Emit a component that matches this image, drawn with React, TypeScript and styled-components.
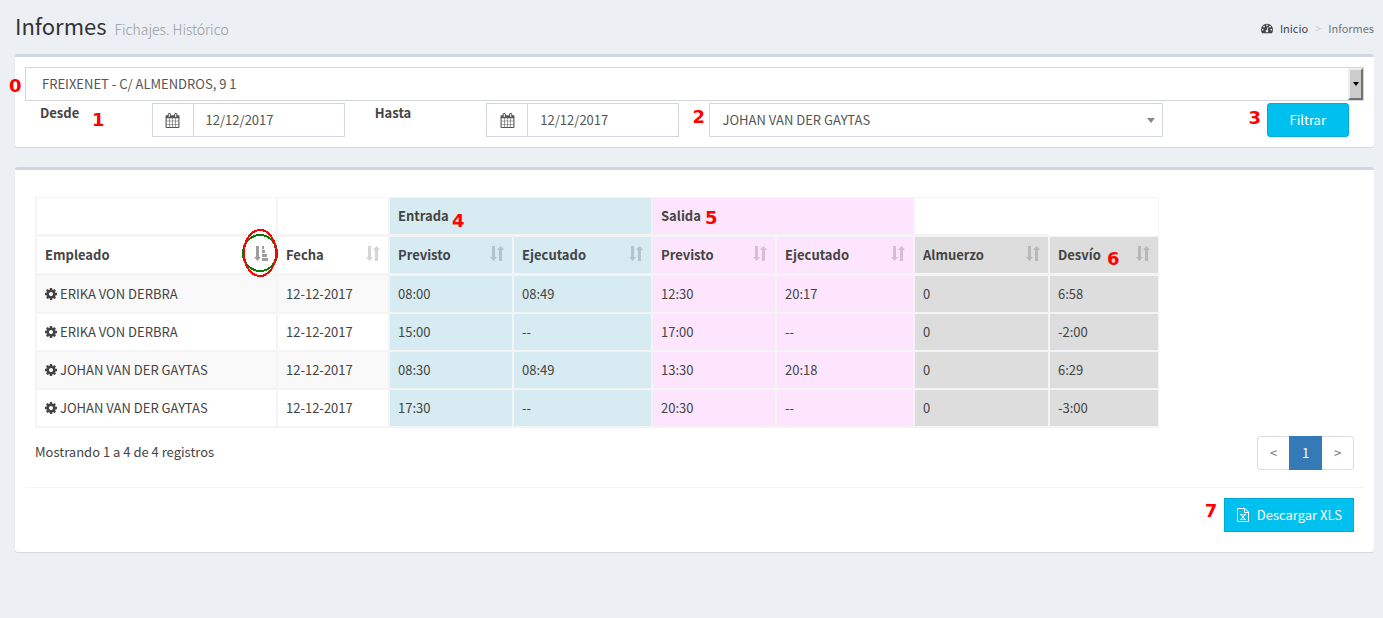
import React from 'react';
import styled, { createGlobalStyle, css } from 'styled-components';

const GlobalStyle = createGlobalStyle`
  *, *::before, *::after { box-sizing: border-box; }
  body {
    margin: 0;
    background: #ecf0f5;
    color: #444;
    font-family: "Source Sans Pro", "Noto Sans CJK SC", sans-serif;
    font-size: 13px;
    line-height: 20px;
  }
  html { background: #ecf0f5; }
  button, input, select { font: inherit; color: inherit; margin: 0; }
`;

/* ---------- icons ---------- */

const Svg = styled.svg<{ $size: number }>`
  display: block;
  flex: none;
  width: ${p => p.$size}px;
  height: ${p => p.$size}px;
  fill: currentColor;
`;

const CALENDAR =
  'M192 1664h288v-288h-288v288zm352 0h320v-288h-320v288zm-352-352h288v-320h-288v320zm352 0h320v-320h-320v320zm-352-384h288v-288h-288v288zm736 736h320v-288h-320v288zm-384-736h320v-288h-320v288zm768 736h288v-288h-288v288zm-384-352h320v-320h-320v320zm-352-864v-288q0-13-9.500-22.500t-22.500-9.500h-64q-13 0-22.500 9.500t-9.500 22.500v288q0 13 9.500 22.500t22.500 9.500h64q13 0 22.500-9.500t9.500-22.500zm736 864h288v-320h-288v320zm-384-384h320v-288h-320v288zm384 0h288v-288h-288v288zm32-480v-288q0-13-9.500-22.500t-22.500-9.500h-64q-13 0-22.500 9.500t-9.500 22.500v288q0 13 9.500 22.500t22.500 9.500h64q13 0 22.500-9.500t9.500-22.500zm384-64v1280q0 52-38 90t-90 38h-1408q-52 0-90-38t-38-90v-1280q0-52 38-90t90-38h128v-96q0-66 47-113t113-47h64q66 0 113 47t47 113v96h384v-96q0-66 47-113t113-47h64q66 0 113 47t47 113v96h128q52 0 90 38t38 90z';
const COG =
  'M1152 896q0-106-75-181t-181-75-181 75-75 181 75 181 181 75 181-75 75-181zm512-109v222q0 12-8 23t-20 13l-185 28q-19 54-39 91 35 50 107 138 10 12 10 25t-9 23q-27 37-99 108t-94 71q-12 0-26-9l-138-108q-44 23-91 38-16 136-29 186-7 28-36 28h-222q-14 0-24.500-8.500t-11.500-21.500l-28-184q-49-16-90-37l-141 107q-10 9-25 9-14 0-25-11-126-114-165-168-7-10-7-23 0-12 8-23 15-21 51-66.500t54-70.500q-27-50-41-99l-183-27q-13-2-21-12.500t-8-23.500v-222q0-12 8-23t19-13l186-28q14-46 39-92-40-57-107-138-10-12-10-24 0-10 9-23 26-36 98.500-107.500t94.500-71.500q13 0 26 10l138 107q44-23 91-38 16-136 29-186 7-28 36-28h222q14 0 24.500 8.500t11.500 21.500l28 184q49 16 90 37l142-107q9-9 24-9 13 0 25 10 129 119 165 170 7 8 7 22 0 12-8 23-15 21-51 66.500t-54 70.500q26 50 41 98l183 28q13 2 21 12.500t8 23.500z';
const DASHBOARD =
  'M384 1152q0-53-37.500-90.500t-90.500-37.500-90.500 37.500-37.500 90.500 37.500 90.500 90.500 37.500 90.500-37.500 37.500-90.500zm192-448q0-53-37.500-90.500t-90.500-37.500-90.500 37.500-37.500 90.500 37.500 90.500 90.500 37.500 90.500-37.500 37.500-90.500zm428 481l101-382q6-26-7.500-48.500t-38.500-29.500-48 6.500-30 39.500l-101 382q-60 5-107 43.500t-63 98.500q-20 77 20 146t117 89 146-20 89-117q16-60-6-117t-72-91zm660-33q0-53-37.500-90.500t-90.500-37.500-90.500 37.500-37.500 90.500 37.500 90.500 90.500 37.500 90.500-37.500 37.500-90.500zm-640-640q0-53-37.500-90.500t-90.500-37.500-90.500 37.500-37.500 90.500 37.500 90.500 90.500 37.500 90.500-37.500 37.500-90.500zm448 192q0-53-37.500-90.500t-90.500-37.500-90.500 37.500-37.500 90.500 37.500 90.500 90.500 37.500 90.500-37.500 37.500-90.500zm320 448q0 261-141 483-19 29-54 29h-1402q-35 0-54-29-141-221-141-483 0-182 71-348t191-286 286-191 348-71 348 71 286 191 191 286 71 348z';

const Icon = ({
  path,
  size,
  viewBox = '0 0 1792 1792',
}: {
  path: string;
  size: number;
  viewBox?: string;
}) => (
  <Svg $size={size} viewBox={viewBox} aria-hidden="true">
    <path d={path} />
  </Svg>
);

const ExcelIcon = () => (
  <Svg $size={14} viewBox="0 0 14 14" aria-hidden="true">
    <path
      d="M1.500.500h7.500l3.500 3.500v9.500h-11zM8.500.500v4h4"
      fill="none"
      stroke="currentColor"
    />
    <path
      d="M5 6.500l4 5M9 6.500l-4 5M4 6.500h2.500M7.500 6.500h2.500M4 11.500h2.500M7.500 11.500h2.500"
      fill="none"
      stroke="currentColor"
    />
  </Svg>
);

const SortGlyph = styled.svg<{ $active?: boolean }>`
  display: block;
  flex: none;
  width: 14px;
  height: 16px;
  margin-top: 1px;
  fill: #000;
  opacity: ${p => (p.$active ? 0.38 : 0.16)};
`;

const SortIcon = ({ active }: { active?: boolean }) => (
  <SortGlyph $active={active} viewBox="0 0 14 16" aria-hidden="true">
    <path d="M2 0h3v11h2l-3.500 4L0 11h2z" />
    {active ? (
      <path d="M8 0h2v3H8zM8 4h3v3H8zM8 8h5v3H8zM8 12h6v3H8z" />
    ) : (
      <path d="M9 15h3V4h2l-3.500-4L7 4h2z" />
    )}
  </SortGlyph>
);

/* ---------- callouts ---------- */

const Mark = styled.span<{ $x: number; $y: number }>`
  position: absolute;
  left: ${p => p.$x}px;
  top: ${p => p.$y}px;
  z-index: 2;
  color: #f00;
  font: bold 18px/18px "DejaVu Sans", sans-serif;
`;

const Ring = styled.svg`
  position: absolute;
  right: -2px;
  top: -9px;
  z-index: 2;
  width: 36px;
  height: 50px;
  fill: none;
  stroke-width: 2;
  shape-rendering: crispEdges;
`;

/* ---------- page ---------- */

const Page = styled.main`
  padding: 15px 9px 15px 15px;
`;

const Header = styled.header`
  display: flex;
  justify-content: space-between;
  align-items: center;
  height: 24px;
  margin-bottom: 15px;
`;

const Title = styled.h1`
  margin: 0;
  color: #333;
  font-size: 22px;
  line-height: 24px;
  font-weight: 400;
`;

const Subtitle = styled.small`
  margin-left: 8px;
  color: #999;
  font-family: "Source Sans Pro Light", "Noto Sans CJK SC Light", "Noto Sans CJK SC", sans-serif;
  font-size: 14px;
  font-weight: 300;
`;

const Crumbs = styled.nav`
  display: flex;
  align-items: center;
  font-size: 11px;
  color: #777;
  padding-top: 2px;
`;

const CrumbLink = styled.a`
  display: flex;
  align-items: center;
  gap: 7px;
  color: #444;
  text-decoration: none;
`;

const CrumbSep = styled.span`
  padding: 0 7px;
  color: #ccc;
`;

const Box = styled.section`
  margin-bottom: 20px;
  padding: 10px;
  background: #fff;
  border-top: 3px solid #d2d6de;
  border-radius: 3px;
  box-shadow: 0 1px 1px rgba(0, 0, 0, 0.1);
`;

const SelectWrap = styled.div`
  position: relative;
  display: flex;
`;

const control = css`
  height: 34px;
  background: #fff;
  border: 1px solid #d2d6de;
  border-radius: 0;
  color: #555;
  appearance: none;
  outline: none;
`;

const Select = styled.select<{ $inset: number }>`
  ${control}
  width: 100%;
  padding: 0 ${p => p.$inset}px;
`;

const DropButton = styled.span`
  position: absolute;
  right: 1px;
  top: 1px;
  bottom: 1px;
  width: 15px;
  display: flex;
  align-items: center;
  justify-content: center;
  background: #ccc;
  border: 2px solid;
  border-color: #eee #707070 #707070 #eee;
  pointer-events: none;
`;

const Caret = styled.span<{ $w: number; $color: string }>`
  border: ${p => p.$w}px solid transparent;
  border-top: ${p => p.$w + 1}px solid ${p => p.$color};
  border-bottom: 0;
`;

const SelectCaret = styled.span`
  position: absolute;
  right: 8px;
  top: 15px;
  display: flex;
  pointer-events: none;
`;

const Filters = styled.form`
  display: grid;
  grid-template-columns:
    minmax(0, 3fr) minmax(0, 6fr) minmax(0, 3fr)
    minmax(0, 6fr) minmax(0, 13fr) minmax(0, 5fr);
  margin-top: 2px;
`;

const Field = styled.div`
  position: relative;
  padding: 0 15px;
`;

const ActionField = styled(Field)`
  display: flex;
  justify-content: flex-end;
`;

const Label = styled.label`
  font-weight: 700;
`;

const DateGroup = styled.div`
  display: flex;
`;

const Addon = styled.span`
  ${control}
  flex: none;
  display: flex;
  align-items: center;
  justify-content: center;
  width: 41px;
  border-right: 0;
`;

const DateInput = styled.input`
  ${control}
  flex: 1;
  min-width: 0;
  padding: 0 12px 2px;
`;

const ButtonHolder = styled.div`
  position: relative;
`;

const Button = styled.button<{ $square?: boolean; $pad: number }>`
  display: flex;
  align-items: center;
  gap: 7px;
  height: 34px;
  padding: 0 ${p => p.$pad}px;
  background: #00c0ef;
  border: 1px solid #00acd6;
  border-radius: ${p => (p.$square ? 0 : 3)}px;
  color: #fff;
`;

/* ---------- table ---------- */

const TableArea = styled.div`
  padding: 17px 10px 8px;
`;

const Table = styled.table`
  border: 1px solid #f4f4f4;
  border-collapse: separate;
  border-spacing: 0;
  text-align: left;
`;

type Tone = 'plain' | 'in' | 'out' | 'calc';
const tones: Record<Tone, string> = {
  plain: 'transparent',
  in: '#d7ebf2',
  out: '#fde6fd',
  calc: '#ddd',
};

const cell = css`
  padding: 8px;
  border: 1px solid #f4f4f4;
  &:last-child { border-right: 0; }
`;

const Th = styled.th<{ $tone: Tone }>`
  ${cell}
  position: relative;
  border-bottom-width: 2px;
  background: ${p => tones[p.$tone]};
`;

const GroupTh = styled(Th)<{ $open?: 'right' | 'left' }>`
  height: 38px;
  border-top: 0;
  ${p => p.$open === 'right' && css`border-right-color: transparent;`}
  ${p => p.$open === 'left' && css`border-left: 0; border-bottom-color: transparent;`}
`;

const HeadCell = styled.div`
  display: flex;
  justify-content: space-between;
  height: 20px;
`;

const Row = styled.tr`
  &:nth-child(odd) { background: #f9f9f9; }
`;

const Td = styled.td<{ $tone: Tone }>`
  ${cell}
  background: ${p => tones[p.$tone]};
`;

const Employee = styled.span`
  display: flex;
  align-items: center;
  gap: 3px;
`;

const TableFooter = styled.div`
  display: flex;
  justify-content: space-between;
  align-items: flex-start;
  padding: 0 10px 17px;
`;

const Info = styled.p`
  margin: 0;
  padding-top: 6px;
`;

const Pager = styled.nav`
  display: flex;
`;

const PageLink = styled.a<{ $current?: boolean }>`
  width: 33px;
  height: 34px;
  border: 1px solid #ddd;
  line-height: 32px;
  text-align: center;
  text-decoration: none;
  color: #777;
  background: #fff;
  &:first-child { border-radius: 4px 0 0 4px; border-right: 0; width: 32px; }
  &:last-child { border-radius: 0 4px 4px 0; border-left: 0; width: 32px; }
  ${p => p.$current && css`
    color: #fff;
    background: #337ab7;
    border-color: #337ab7;
  `}
`;

const BoxFooter = styled.footer`
  display: flex;
  justify-content: flex-end;
  padding: 10px;
  border-top: 1px solid #f4f4f4;
`;

const widths = [241, 112, 124, 139, 124, 138, 135, 109];

const columns: { label: string; tone: Tone }[] = [
  { label: 'Empleado', tone: 'plain' },
  { label: 'Fecha', tone: 'plain' },
  { label: 'Previsto', tone: 'in' },
  { label: 'Ejecutado', tone: 'in' },
  { label: 'Previsto', tone: 'out' },
  { label: 'Ejecutado', tone: 'out' },
  { label: 'Almuerzo', tone: 'calc' },
  { label: 'Desvío', tone: 'calc' },
];

const rows = [
  ['ERIKA VON DERBRA', '12-12-2017', '08:00', '08:49', '12:30', '20:17', '0', '6:58'],
  ['ERIKA VON DERBRA', '12-12-2017', '15:00', '--', '17:00', '--', '0', '-2:00'],
  ['JOHAN VAN DER GAYTAS', '12-12-2017', '08:30', '08:49', '13:30', '20:18', '0', '6:29'],
  ['JOHAN VAN DER GAYTAS', '12-12-2017', '17:30', '--', '20:30', '--', '0', '-3:00'],
];

const DateField = ({ id }: { id: string }) => (
  <DateGroup>
    <Addon>
      <Icon path={CALENDAR} size={15} />
    </Addon>
    <DateInput id={id} type="text" defaultValue="12/12/2017" />
  </DateGroup>
);

export default function App() {
  return (
    <>
      <GlobalStyle />
      <Page>
        <Header>
          <Title>
            Informes
            <Subtitle>Fichajes. Histórico</Subtitle>
          </Title>
          <Crumbs aria-label="Ruta">
            <CrumbLink href="#inicio">
              <Icon path={DASHBOARD} size={12} />
              Inicio
            </CrumbLink>
            <CrumbSep>&gt;</CrumbSep>
            <span>Informes</span>
          </Crumbs>
        </Header>

        <Box>
          <SelectWrap>
            <Mark $x={-16} $y={10}>0</Mark>
            <Select $inset={16} aria-label="Centro">
              <option>FREIXENET - C/ ALMENDROS, 9 1</option>
            </Select>
            <DropButton>
              <Caret $w={3} $color="#000" />
            </DropButton>
          </SelectWrap>
          <Filters onSubmit={e => e.preventDefault()}>
            <Field>
              <Label htmlFor="desde">Desde</Label>
              <Mark $x={67} $y={8}>1</Mark>
            </Field>
            <Field>
              <DateField id="desde" />
            </Field>
            <Field>
              <Label htmlFor="hasta">Hasta</Label>
            </Field>
            <Field>
              <DateField id="hasta" />
            </Field>
            <Field>
              <Mark $x={-2} $y={5}>2</Mark>
              <SelectWrap>
                <Select $inset={12} aria-label="Empleado">
                  <option>JOHAN VAN DER GAYTAS</option>
                </Select>
                <SelectCaret>
                  <Caret $w={4} $color="#888" />
                </SelectCaret>
              </SelectWrap>
            </Field>
            <ActionField>
              <ButtonHolder>
                <Mark $x={-18} $y={6}>3</Mark>
                <Button type="submit" $pad={22}>Filtrar</Button>
              </ButtonHolder>
            </ActionField>
          </Filters>
        </Box>

        <Box>
          <TableArea>
            <Table>
              <colgroup>
                {widths.map((w, i) => (
                  <col key={i} width={w} />
                ))}
              </colgroup>
              <thead>
                <tr>
                  <GroupTh as="td" $tone="plain" />
                  <GroupTh as="td" $tone="plain" />
                  <GroupTh $tone="in" colSpan={2}>
                    Entrada
                    <Mark $x={62} $y={14}>4</Mark>
                  </GroupTh>
                  <GroupTh $tone="out" colSpan={2}>
                    Salida
                    <Mark $x={52} $y={11}>5</Mark>
                  </GroupTh>
                  <GroupTh as="td" $tone="plain" $open="right" />
                  <GroupTh as="td" $tone="plain" $open="left" />
                </tr>
                <tr>
                  {columns.map((c, i) => (
                    <Th key={i} $tone={c.tone}>
                      <HeadCell>
                        {c.label}
                        <SortIcon active={i === 0} />
                      </HeadCell>
                      {i === 0 && (
                        <Ring viewBox="0 0 36 50" aria-hidden="true">
                          <ellipse cx="18" cy="25" rx="17" ry="18" stroke="#008000" />
                          <ellipse cx="18" cy="25" rx="16" ry="23" stroke="#f00" />
                        </Ring>
                      )}
                      {i === 7 && <Mark $x={57} $y={13}>6</Mark>}
                    </Th>
                  ))}
                </tr>
              </thead>
              <tbody>
                {rows.map((r, i) => (
                  <Row key={i}>
                    {r.map((value, j) => (
                      <Td key={j} $tone={columns[j].tone}>
                        {j === 0 ? (
                          <Employee>
                            <Icon path={COG} size={12} viewBox="128 128 1536 1536" />
                            {value}
                          </Employee>
                        ) : (
                          value
                        )}
                      </Td>
                    ))}
                  </Row>
                ))}
              </tbody>
            </Table>
          </TableArea>
          <TableFooter>
            <Info>Mostrando 1 a 4 de 4 registros</Info>
            <Pager aria-label="Paginación">
              <PageLink href="#anterior">&lt;</PageLink>
              <PageLink href="#1" $current>1</PageLink>
              <PageLink href="#siguiente">&gt;</PageLink>
            </Pager>
          </TableFooter>
          <BoxFooter>
            <ButtonHolder>
              <Mark $x={-19} $y={4}>7</Mark>
              <Button type="button" $square $pad={11}>
                <ExcelIcon />
                Descargar XLS
              </Button>
            </ButtonHolder>
          </BoxFooter>
        </Box>
      </Page>
    </>
  );
}
